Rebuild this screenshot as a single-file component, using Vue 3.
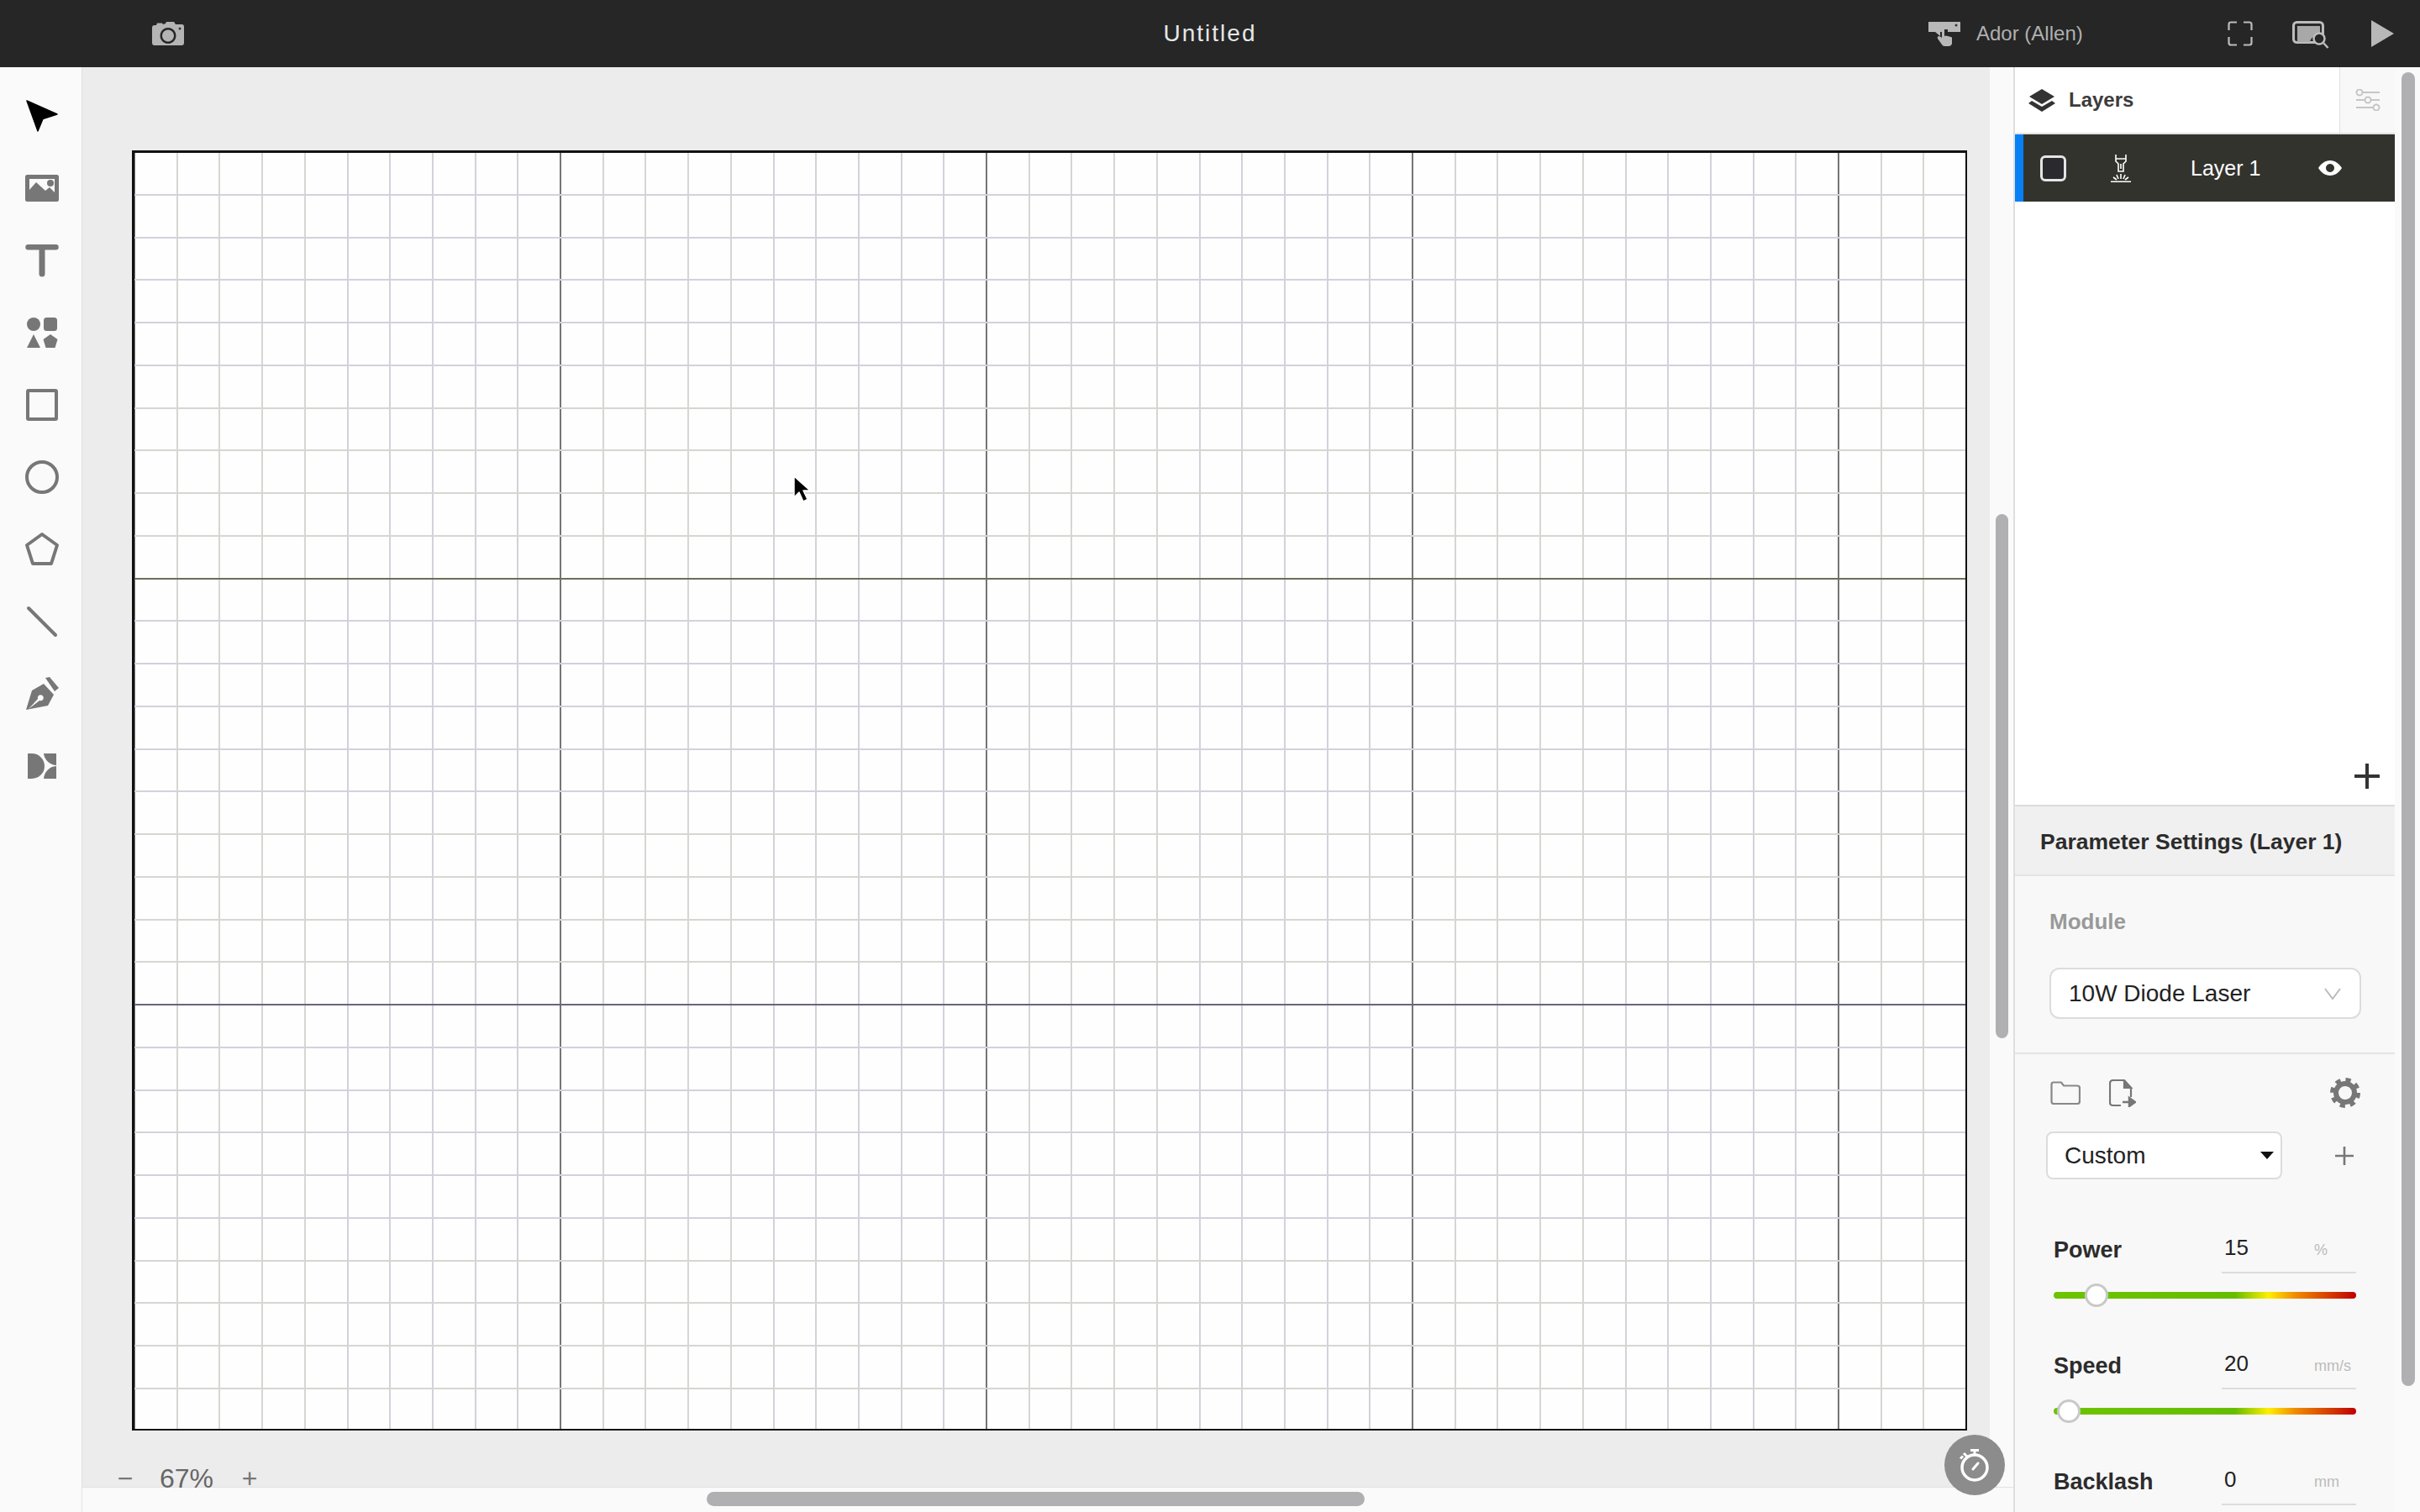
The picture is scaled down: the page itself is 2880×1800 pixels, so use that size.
<script setup>
const colX = Array.from({ length: 44 }, (_, i) => ({
  i,
  p: Math.round(50.7 * i),
  cls: i % 10 === 0 ? 'major' : i % 10 < 5 ? 'minor-g' : 'minor-p'
}))
const rowY = Array.from({ length: 31 }, (_, j) => ({
  j,
  p: Math.round(50.75 * j) - 1,
  cls: j % 10 === 0 ? (j === 10 ? 'major-o' : 'major-n') : j % 10 < 6 ? 'minor-p' : 'minor-g'
}))
const params = [
  { name: 'Power', value: '15', unit: '%', thumb: 51 },
  { name: 'Speed', value: '20', unit: 'mm/s', thumb: 18 },
  { name: 'Backlash', value: '0', unit: 'mm', thumb: null }
]
</script>

<template>
  <div class="app">
    <header class="topbar">
      <div class="top-left">
        <svg class="ic-camera" width="38" height="28" viewBox="0 0 38 28">
          <path fill="#b4b4b4" fill-rule="evenodd" d="M3 4h2l1-2.500h6L13 3l3-1 1-2h9l2 3h7.500Q38 3 38 6v19q0 3-3 3H3q-3 0-3-3V7q0-3 3-3Zm16 3a9.500 9.500 0 1 0 .01 0Zm0 2.500a7 7 0 1 1-.01 0Z"/>
          <circle cx="33" cy="8" r="1.500" fill="#333"/>
        </svg>
      </div>
      <div class="title">Untitled</div>
      <div class="top-right">
        <svg class="ic-hand" width="38" height="30" viewBox="0 0 38 30">
          <path fill="#b8b8b8" d="M0 1h38v12H23v-3h-6v3h-3v5L8 13H0Z"/>
          <circle cx="33" cy="5" r="1.500" fill="#333"/>
          <path fill="#b8b8b8" d="M16 9q2.500-1 3 1v8l2-.500 2 .500 2 .500 3 1V27q-1 3-4 3h-5q-2 0-3-2l-5-7q-1-2 1-3 2 0 4 2Z"/>
        </svg>
        <span class="machine">Ador (Allen)</span>
        <svg class="ic-full" width="30" height="30" viewBox="0 0 30 30" fill="none" stroke="#bcbcbc" stroke-width="2.200">
          <path d="M1.500 11V4q0-2.500 2.500-2.500h7M19 1.500h7q2.500 0 2.500 2.500v7M28.500 19v7q0 2.500-2.500 2.500h-7M11 28.500H4q-2.500 0-2.500-2.500v-7"/>
        </svg>
        <svg class="ic-preview" width="44" height="33" viewBox="0 0 44 33">
          <rect x="1.500" y="1.500" width="35" height="24" rx="4" fill="#2a2a2a" stroke="#bcbcbc" stroke-width="3"/>
          <path d="M6 6h27v12a9 9 0 0 0-12 7H6Z" fill="#a8a8a8"/>
          <circle cx="32" cy="21" r="6.500" fill="#262626" stroke="#bcbcbc" stroke-width="2.500"/>
          <path d="M37 26l5.500 6" stroke="#bcbcbc" stroke-width="2.500" fill="none"/>
        </svg>
        <svg class="ic-play" width="27" height="32" viewBox="0 0 27 32"><path fill="#b8b8b8" d="M0 0l27 16L0 32Z"/></svg>
      </div>
    </header>

    <div class="main">
      <nav class="toolbar">
        <div class="tool">
          <svg width="40" height="40" viewBox="0 0 40 40"><path fill="#000" stroke="#000" stroke-width="1.500" stroke-linejoin="round" d="M2 2l36 16-17 5.500L15 38Z"/></svg>
        </div>
        <div class="tool">
          <svg width="40" height="32" viewBox="0 0 40 32">
            <rect width="40" height="32" rx="2.500" fill="#777"/>
            <path fill="#fafafa" d="M5 5h30v16l-6-6-5 4L13 9l-8 9Z"/>
            <circle cx="30" cy="10" r="4" fill="#777"/>
          </svg>
        </div>
        <div class="tool">
          <svg width="40" height="40" viewBox="0 0 40 40"><path fill="#777" d="M3.500 1h33a2.500 2.500 0 0 1 0 6.500h-13V36a3.500 3.500 0 0 1-7 0V7.500h-13a2.500 2.500 0 0 1 0-6.500Z"/></svg>
        </div>
        <div class="tool">
          <svg width="40" height="40" viewBox="0 0 40 40" fill="#777">
            <circle cx="10" cy="10" r="8"/>
            <rect x="22" y="2" width="16" height="16" rx="3.500"/>
            <path d="M10 22l8 16H2Z"/>
            <path d="M30 22l8.500 6-3 10h-11l-3-10Z"/>
          </svg>
        </div>
        <div class="tool">
          <svg width="40" height="40" viewBox="0 0 40 40"><rect x="3" y="3" width="34" height="34" rx="1" fill="none" stroke="#777" stroke-width="4"/></svg>
        </div>
        <div class="tool">
          <svg width="40" height="40" viewBox="0 0 40 40"><circle cx="20" cy="20" r="18" fill="none" stroke="#777" stroke-width="4"/></svg>
        </div>
        <div class="tool">
          <svg width="42" height="42" viewBox="0 0 42 42"><path d="M21 3l18 13-7 22H10L3 16Z" fill="none" stroke="#777" stroke-width="4" stroke-linejoin="round"/></svg>
        </div>
        <div class="tool">
          <svg width="40" height="40" viewBox="0 0 40 40"><path d="M4 4l32 32" stroke="#777" stroke-width="4" stroke-linecap="round"/></svg>
        </div>
        <div class="tool">
          <svg width="40" height="40" viewBox="0 0 40 40" fill="#777">
            <path d="M24 1l5-1 11 13-5 4Z"/>
            <path fill-rule="evenodd" d="M1 39l7-23 14-8 12 13-7 13Zm3-1l13-10a3.500 3.500 0 1 0-2-2Z"/>
          </svg>
        </div>
        <div class="tool">
          <svg width="34" height="30" viewBox="0 0 34 30" fill="#777">
            <path d="M0 0h5a15 15 0 0 1 0 30H0Z"/>
            <path d="M19 0h15v14A16 16 0 0 1 19 0Z"/>
            <path d="M19 30a16 16 0 0 1 15-15v15Z"/>
          </svg>
        </div>
      </nav>

      <div class="workspace">
        <div class="view-row">
          <div class="canvas-area">
            <div class="board">
              <svg class="grid" width="2179" height="1519">
                <line v-for="c in colX" :key="'c' + c.i" :x1="c.p" :x2="c.p" y1="0" y2="1519" :class="c.cls" />
                <line v-for="r in rowY" :key="'r' + r.j" :y1="r.p" :y2="r.p" x1="0" x2="2179" :class="r.cls" />
              </svg>
            </div>
          </div>
          <div class="v-strip"><div class="v-thumb"></div></div>
        </div>
        <div class="h-strip"><div class="h-thumb"></div></div>

        <div class="zoom-ctrl">
          <span class="zoom-btn">−</span>
          <span class="zoom-val">67%</span>
          <span class="zoom-btn">+</span>
        </div>
        <div class="timer">
          <svg width="36" height="40" viewBox="0 0 36 40" fill="none" stroke="#fff" stroke-width="3.500">
            <circle cx="18" cy="23" r="15"/>
            <path d="M13 2.500h10M18 2.500V8M4 9.500l-3 3M5 6l5 5" stroke-width="3"/>
            <path d="M16 25l6-7" stroke-width="3" stroke-linecap="round"/>
          </svg>
        </div>
        <svg class="pointer" width="22" height="34" viewBox="0 0 22 34">
          <path d="M2 2v25l6-6 5 11 5-2.500-5-10.500h8Z" fill="#000" stroke="#fff" stroke-width="1.500" stroke-linejoin="round"/>
        </svg>
      </div>

      <aside class="panel">
        <div class="tabs">
          <div class="tab-layers">
            <svg width="32" height="27" viewBox="0 0 32 27" fill="#333">
              <path d="M16 0l15 9-15 9L1 9Z"/>
              <path d="M4 14l12 7 12-7 4 3-16 10L0 17Z"/>
            </svg>
            <span>Layers</span>
          </div>
          <div class="tab-settings">
            <svg width="30" height="26" viewBox="0 0 30 26" fill="none" stroke="#c6c6c6" stroke-width="2">
              <path d="M8 4h21M1 13h10M19 13h10M1 22h20"/>
              <circle cx="5" cy="4" r="3.500"/><circle cx="15" cy="13" r="3.500"/><circle cx="25" cy="22" r="3.500"/>
            </svg>
          </div>
        </div>
        <div class="layer-row">
          <span class="check"></span>
          <svg class="ic-laser" width="24" height="33" viewBox="0 0 24 33" fill="none" stroke="#fff" stroke-width="1.600">
            <path d="M6 0v5h12V0M6 5v3l3 3v9h6v-9l3-3V5M12 11v6"/>
            <path d="M0 32.200h24M12 23v6M7 24l2 5M17 24l-2 5M3 27l4 3M21 27l-4 3" />
          </svg>
          <span class="layer-name">Layer 1</span>
          <svg class="ic-eye" width="28" height="18" viewBox="0 0 28 18">
            <path fill="#fff" fill-rule="evenodd" d="M14 0c6 0 11 4 14 9-3 5-8 9-14 9S3 14 0 9c3-5 8-9 14-9Zm0 4a5 5 0 1 0 .01 0Z"/>
          </svg>
        </div>
        <div class="layer-list">
          <svg width="30" height="30" viewBox="0 0 30 30"><path d="M15 1v28M1 15h28" stroke="#333" stroke-width="4" stroke-linecap="round"/></svg>
        </div>

        <div class="param-head">Parameter Settings (Layer 1)</div>

        <section class="module">
          <div class="module-label">Module</div>
          <div class="module-select">
            <span>10W Diode Laser</span>
            <svg width="20" height="14" viewBox="0 0 20 14"><path d="M1 1l9 12 9-12" fill="none" stroke="#bbb" stroke-width="2"/></svg>
          </div>
        </section>

        <section class="settings">
          <div class="preset-icons">
            <svg width="36" height="28" viewBox="0 0 36 28" fill="none" stroke="#888" stroke-width="2.200">
              <path d="M1.500 24V4q0-2.500 2.500-2.500h9l3 4h16q3 0 3 3V24q0 3-3 3H4q-2.500 0-2.500-3Z"/>
            </svg>
            <svg class="ic-export" width="32" height="33" viewBox="0 0 32 33" fill="none" stroke="#777" stroke-width="2.200">
              <path d="M14 31H5q-4 0-4-3V5q0-4 4-4h12l9 9v11"/>
              <path d="M18 1v9h8Z" fill="#777"/>
              <path d="M16 27h8M24 22l7 5-7 5Z" fill="#777" stroke-width="2.500"/>
            </svg>
            <svg class="ic-gear" width="36" height="36" viewBox="0 0 36 36" fill="none" stroke="#777">
              <circle cx="18" cy="18" r="11" stroke-width="6"/>
              <circle cx="18" cy="18" r="15.500" stroke-width="5" stroke-dasharray="6.170 6"/>
            </svg>
          </div>
          <div class="preset-row">
            <div class="preset-select">
              <span>Custom</span>
              <i class="caret"></i>
            </div>
            <svg width="24" height="24" viewBox="0 0 24 24"><path d="M12 1v22M1 12h22" stroke="#777" stroke-width="2.600"/></svg>
          </div>

          <div v-for="p in params" :key="p.name" class="param">
            <div class="param-top">
              <span class="param-name">{{ p.name }}</span>
              <div class="param-input">
                <span class="param-value">{{ p.value }}</span>
                <span class="param-unit">{{ p.unit }}</span>
              </div>
            </div>
            <div v-if="p.thumb !== null" class="track">
              <span class="thumb" :style="{ left: p.thumb + 'px' }"></span>
            </div>
          </div>
        </section>
      </aside>

      <div class="right-strip"><div class="right-thumb"></div></div>
    </div>
  </div>
</template>

<style>
html, body { margin: 0; padding: 0; overflow: hidden; background: #fafafa; }
</style>

<style scoped>
.app {
  width: 2880px;
  height: 1800px;
  display: flex;
  flex-direction: column;
  overflow: hidden;
  font-family: "Liberation Sans", Arial, sans-serif;
  color: #333;
}
svg { display: block; flex: none; }

/* top bar */
.topbar {
  height: 80px;
  flex: none;
  background: #262626;
  display: grid;
  grid-template-columns: 1fr auto 1fr;
  align-items: center;
}
.top-left { padding-left: 181px; }
.title { font-size: 28px; letter-spacing: 2px; color: #e6e6e6; }
.top-right {
  display: flex;
  align-items: center;
  justify-content: flex-end;
  padding-right: 31px;
}
.machine { margin-left: 19px; font-size: 24px; color: #b0b0b0; width: 128px; white-space: nowrap; }
.ic-full { margin-left: 171px; }
.ic-preview { margin-left: 47px; margin-top: 3px; }
.ic-play { margin-left: 50px; }

/* main */
.main { flex: 1; display: flex; min-height: 0; }
.toolbar {
  width: 97px;
  flex: none;
  box-sizing: border-box;
  padding: 15px 0 0 3px;
  background: #fafafa;
  display: flex;
  flex-direction: column;
  align-items: center;
}
.tool { height: 86px; flex: none; display: flex; align-items: center; justify-content: center; }

.workspace {
  position: relative;
  width: 2299px;
  flex: none;
  display: flex;
  flex-direction: column;
  border-left: 1px solid #e2e2e2;
  box-sizing: border-box;
}
.view-row { flex: 1; display: flex; min-height: 0; }
.canvas-area { width: 2270px; flex: none; background: #ececec; padding: 99px 0 0 59px; box-sizing: border-box; }
.board {
  width: 2179px;
  height: 1519px;
  background: #fefefe;
  border-style: solid;
  border-color: #111;
  border-width: 3px 2px 2px 3px;
}
.grid { overflow: hidden; }
.grid line { stroke-width: 2; }
.minor-g { stroke: #d6d6d2; }
.minor-p { stroke: #d2d2dc; }
.major { stroke: #757575; }
.major-o { stroke: #6e6e58; }
.major-n { stroke: #666680; }

.v-strip { width: 28px; flex: none; background: #fafafa; padding: 532px 0 0 7px; box-sizing: border-box; }
.v-thumb { width: 15px; height: 624px; border-radius: 8px; background: #b0b0b2; }
.h-strip { height: 30px; flex: none; background: #fafafa; border-top: 1px solid #e2e2e2; box-sizing: border-box; padding: 5px 0 0 743px; }
.h-thumb { width: 783px; height: 17px; border-radius: 9px; background: #b0b0b2; }

.zoom-ctrl {
  position: absolute;
  left: 41px;
  top: 1660px;
  display: flex;
  align-items: center;
  color: #666;
  font-size: 32px;
  line-height: 40px;
}
.zoom-btn { width: 20px; text-align: center; color: #777; }
.zoom-val { margin: 0 33px 0 31px; }
.timer {
  position: absolute;
  left: 2216px;
  top: 1628px;
  width: 72px;
  height: 72px;
  border-radius: 50%;
  background: #8c8c8c;
  display: flex;
  align-items: center;
  justify-content: center;
}
.pointer { position: absolute; left: 845px; top: 485px; }

/* panel */
.panel {
  width: 454px;
  flex: none;
  box-sizing: border-box;
  background: #f8f8f8;
  border-left: 2px solid #dedede;
  overflow: hidden;
  display: flex;
  flex-direction: column;
}
.tabs { height: 80px; flex: none; display: flex; }
.tab-layers {
  flex: 1;
  background: #fff;
  border-bottom: 2px solid #e2e2e2;
  box-sizing: border-box;
  display: flex;
  align-items: center;
  gap: 16px;
  padding-left: 16px;
  font-size: 24px;
  font-weight: 700;
  color: #3c3c3c;
}
.tab-settings {
  width: 66px;
  flex: none;
  background: #f8f8f8;
  border-left: 1px solid #e2e2e2;
  border-bottom: 2px solid #e2e2e2;
  box-sizing: border-box;
  display: flex;
  align-items: center;
  justify-content: center;
}
.layer-row {
  height: 80px;
  flex: none;
  background: #33332e;
  border-left: 10px solid #0580f5;
  box-sizing: border-box;
  display: flex;
  align-items: center;
  color: #fff;
}
.check {
  width: 31px;
  height: 31px;
  box-sizing: border-box;
  border: 3px solid #e4e4e4;
  border-radius: 6px;
  background: #2a2a2e;
  margin-left: 20px;
}
.ic-laser { margin-left: 53px; }
.layer-name { margin-left: 71px; font-size: 25px; width: 84px; white-space: nowrap; }
.ic-eye { margin-left: 68px; }
.layer-list {
  height: 720px;
  flex: none;
  background: #fff;
  box-sizing: border-box;
  border-bottom: 2px solid #dcdcdc;
  display: flex;
  align-items: flex-end;
  justify-content: flex-end;
  padding: 0 18px 19px 0;
}
.param-head {
  height: 83px;
  flex: none;
  background: #f0f0f0;
  border-bottom: 2px solid #e4e4e4;
  box-sizing: border-box;
  padding: 4px 0 0 30px;
  display: flex;
  align-items: center;
  font-size: 26.500px;
  font-weight: 700;
  color: #2c2c2c;
  white-space: nowrap;
}
.module {
  height: 212px;
  flex: none;
  box-sizing: border-box;
  border-bottom: 2px solid #e4e4e4;
  padding: 39px 0 0 41px;
}
.module-label { font-size: 26px; line-height: 30px; font-weight: 700; color: #999; }
.module-select {
  margin-top: 40px;
  width: 371px;
  height: 61px;
  box-sizing: border-box;
  background: #fff;
  border: 2px solid #dcdcdc;
  border-radius: 12px;
  display: flex;
  align-items: center;
  justify-content: space-between;
  padding: 0 22px 0 21px;
  font-size: 28px;
  color: #222;
}
.settings { padding: 28px 0 0 0; }
.preset-icons { height: 36px; display: flex; align-items: center; padding-left: 42px; }
.ic-export { margin-left: 34px; }
.ic-gear { margin-left: 231px; }
.preset-row { margin-top: 28px; height: 57px; display: flex; align-items: center; padding-left: 37px; }
.preset-select {
  width: 281px;
  height: 57px;
  box-sizing: border-box;
  background: #fff;
  border: 2px solid #dcdcdc;
  border-radius: 8px;
  display: flex;
  align-items: center;
  justify-content: space-between;
  padding: 0 8px 0 20px;
  font-size: 28px;
  color: #222;
}
.caret {
  width: 0;
  height: 0;
  border-left: 8px solid transparent;
  border-right: 8px solid transparent;
  border-top: 9px solid #111;
}
.preset-row svg { margin-left: 62px; }
.param { height: 138px; box-sizing: border-box; margin-left: 46px; width: 360px; }
.preset-row + .param { margin-top: 52px; }
.param-top { height: 60px; display: flex; }
.param-name {
  width: 200px;
  flex: none;
  padding-top: 4px;
  box-sizing: border-box;
  display: flex;
  align-items: center;
  font-size: 27px;
  font-weight: 700;
  color: #2c2c2c;
}
.param-input {
  flex: 1;
  display: flex;
  align-items: center;
  box-sizing: border-box;
  border-bottom: 2px solid #dcdcdc;
  padding-left: 3px;
}
.param-value { width: 107px; flex: none; font-size: 26px; color: #222; }
.param-unit { font-size: 18px; color: #bbb; padding-top: 6px; }
.track {
  position: relative;
  height: 8px;
  margin-top: 22px;
  border-radius: 4px;
  background: linear-gradient(90deg, #6cc400 0%, #66bd00 60%, #ffee00 71%, #f08a00 80%, #c00000 100%);
}
.thumb {
  position: absolute;
  top: -10px;
  width: 28px;
  height: 28px;
  box-sizing: border-box;
  margin-left: -14px;
  border-radius: 50%;
  background: #fff;
  border: 3px solid #c9c9c9;
}
.right-strip { width: 30px; flex: none; background: #fafafa; padding: 6px 0 0 8px; box-sizing: border-box; }
.right-thumb { width: 16px; height: 1564px; border-radius: 8px; background: #b0b0b2; }
</style>
